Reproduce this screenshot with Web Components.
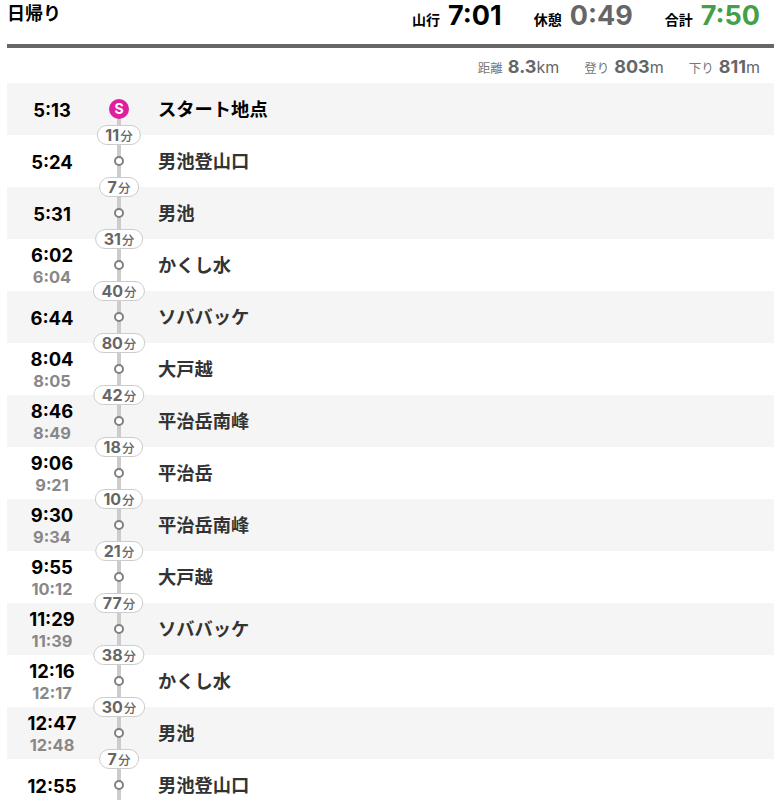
<!DOCTYPE html>
<html lang="ja">
<head>
<meta charset="utf-8">
<title>日帰り</title>
<style>
  html { overflow: hidden; }
  body {
    margin: 0;
    padding-left: 7px;
    background: #fff;
    font-family: Inter, "Noto Sans CJK JP", sans-serif;
  }
</style>
</head>
<body>
<course-summary title-text="日帰り" walk="7:01" rest="0:49" total="7:50" distance="8.3" up="803" down="811"></course-summary>
<course-table>
  <course-row time="5:13" name="スタート地点" start next="11"></course-row>
  <course-row time="5:24" name="男池登山口" next="7"></course-row>
  <course-row time="5:31" name="男池" next="31"></course-row>
  <course-row time="6:02" leave="6:04" name="かくし水" next="40"></course-row>
  <course-row time="6:44" name="ソババッケ" next="80"></course-row>
  <course-row time="8:04" leave="8:05" name="大戸越" next="42"></course-row>
  <course-row time="8:46" leave="8:49" name="平治岳南峰" next="18"></course-row>
  <course-row time="9:06" leave="9:21" name="平治岳" next="10"></course-row>
  <course-row time="9:30" leave="9:34" name="平治岳南峰" next="21"></course-row>
  <course-row time="9:55" leave="10:12" name="大戸越" next="77"></course-row>
  <course-row time="11:29" leave="11:39" name="ソババッケ" next="38"></course-row>
  <course-row time="12:16" leave="12:17" name="かくし水" next="30"></course-row>
  <course-row time="12:47" leave="12:48" name="男池" next="7"></course-row>
  <course-row time="12:55" name="男池登山口"></course-row>
</course-table>
<script>
class CourseSummary extends HTMLElement {
  constructor() {
    super();
    this.attachShadow({ mode: 'open' });
  }

  connectedCallback() {
    const a = (n) => this.getAttribute(n);
    this.shadowRoot.innerHTML = `
      <style>
        :host { display: block; }
        .top {
          height: 44px;
          border-bottom: 4px solid #666;
          display: flex;
          justify-content: space-between;
          color: #000;
        }
        h1 { margin: 3px 0 0; font-size: 18px; line-height: 22px; font-weight: 700; }
        .times { display: flex; padding-right: 14px; padding-top: 1px; }
        .time { display: flex; align-items: baseline; margin-left: 32px; height: 30px; }
        .time small { font-size: 14px; font-weight: 700; margin-right: 8px; }
        .time b { font-size: 27px; line-height: 30px; font-weight: 700; }
        .rest b { color: #666; }
        .total b { color: #43a047; }
        .stats {
          height: 37px;
          margin-bottom: -2px;
          display: flex;
          justify-content: flex-end;
          align-items: center;
          padding-right: 14px;
          color: #666;
          font-size: 16px;
        }
        .stats span { margin-left: 25px; white-space: nowrap; }
        .stats small { font-size: 12.5px; margin-right: 5px; color: #777; }
        .stats b { font-size: 18px; font-weight: 700; }
      </style>
      <div class="top">
        <h1>${a('title-text')}</h1>
        <div class="times">
          <div class="time"><small>山行</small><b>${a('walk')}</b></div>
          <div class="time rest"><small>休憩</small><b>${a('rest')}</b></div>
          <div class="time total"><small>合計</small><b>${a('total')}</b></div>
        </div>
      </div>
      <div class="stats">
        <span><small>距離</small><b>${a('distance')}</b>km</span>
        <span><small>登り</small><b>${a('up')}</b>m</span>
        <span><small>下り</small><b>${a('down')}</b>m</span>
      </div>`;
  }
}

class CourseTable extends HTMLElement {
  constructor() {
    super();
    this.attachShadow({ mode: 'open' });
    this.shadowRoot.innerHTML = `
      <style>
        :host { display: block; }
        ::slotted(course-row:nth-child(odd)) { background: #f5f5f5; }
      </style>
      <slot></slot>`;
  }
}

class CourseRow extends HTMLElement {
  constructor() {
    super();
    this.attachShadow({ mode: 'open' });
  }

  connectedCallback() {
    const time = this.getAttribute('time');
    const leave = this.getAttribute('leave');
    const next = this.getAttribute('next');
    const start = this.hasAttribute('start');
    this.shadowRoot.innerHTML = `
      <style>
        :host {
          display: grid;
          grid-template-columns: 90px 44px 1fr;
          height: 52px;
          align-items: center;
        }
        .time { text-align: center; padding-top: 2px; }
        .time div { font-size: 18.4px; line-height: 22px; font-weight: 700; color: #000; }
        .time .leave { font-size: 16.4px; color: #888; }
        .track {
          position: relative;
          height: 52px;
          display: flex;
          align-items: center;
          justify-content: center;
        }
        .track::before {
          content: '';
          position: absolute;
          left: 20px;
          width: 4px;
          top: 0;
          bottom: -1px;
          background: #ccc;
        }
        .start .track::before { top: 26px; }
        .dot {
          position: relative;
          box-sizing: border-box;
          width: 10px;
          height: 10px;
          border: 2.5px solid #808080;
          border-radius: 50%;
          background: #fff;
        }
        .s {
          position: relative;
          width: 20px;
          height: 20px;
          border-radius: 50%;
          background: #de1f9e;
          color: #fff;
          font-size: 14px;
          font-weight: 700;
          line-height: 20px;
          text-align: center;
        }
        .badge {
          position: absolute;
          z-index: 1;
          left: 22px;
          bottom: -10px;
          transform: translateX(-50%);
          box-sizing: border-box;
          height: 20px;
          padding: 0 7.5px;
          border: 1px solid #ccc;
          border-radius: 10px;
          background: #fff;
          color: #666;
          font-size: 16px;
          font-weight: 700;
          line-height: 18px;
          white-space: nowrap;
        }
        .badge small { font-size: 12.5px; font-weight: 500; margin-left: 1px; }
        .name {
          padding-left: 17px;
          padding-bottom: 2px;
          font-size: 18.3px;
          font-weight: 700;
          color: #333;
        }
        .start .name { color: #000; }
        .wrap { display: contents; }
      </style>
      <div class="wrap ${start ? 'start' : ''}">
        <div class="time">
          <div>${time}</div>
          ${leave ? `<div class="leave">${leave}</div>` : ''}
        </div>
        <div class="track">
          ${start ? '<div class="s">S</div>' : '<div class="dot"></div>'}
          ${next ? `<div class="badge">${next}<small>分</small></div>` : ''}
        </div>
        <div class="name">${this.getAttribute('name')}</div>
      </div>`;
  }
}

customElements.define('course-summary', CourseSummary);
customElements.define('course-table', CourseTable);
customElements.define('course-row', CourseRow);
</script>
</body>
</html>
